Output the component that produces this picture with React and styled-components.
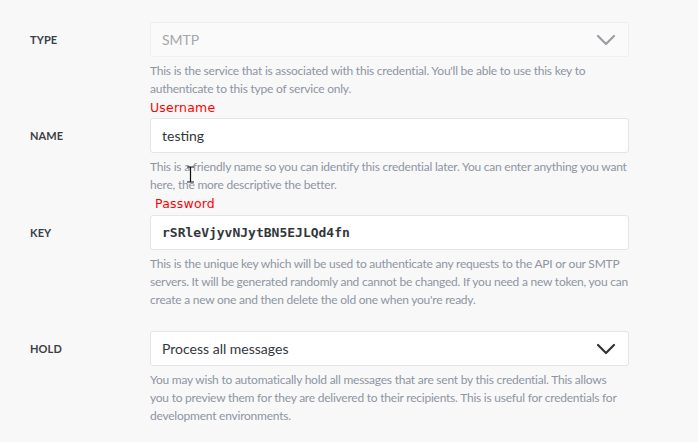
import React from 'react';
import styled, { createGlobalStyle, css } from 'styled-components';

const GlobalStyle = createGlobalStyle`
  html, body {
    margin: 0;
    padding: 0;
    background: #f8f8f9;
  }
  body {
    font-family: Lato, "Open Sans", "Liberation Sans", sans-serif;
    -webkit-font-smoothing: antialiased;
  }
`;

const Page = styled.div`
  position: relative;
  width: 698px;
  height: 442px;
  overflow: hidden;
  padding: 2px 0 0 30px;
  box-sizing: border-box;
`;

const Field = styled.div`
  display: grid;
  grid-template-columns: 120px 479px;
  grid-template-areas:
    ". note"
    "label control"
    ". help";
  align-items: center;
`;

const Note = styled.div`
  grid-area: note;
  box-sizing: border-box;
  height: ${p => p.$height || 20}px;
  padding: 3px 0 0 ${p => p.$indent || 0}px;
  font-family: "DejaVu Sans", Verdana, sans-serif;
  font-size: 12.5px;
  line-height: 14px;
  color: #ff0000;
  letter-spacing: 0.2px;
`;

const Label = styled.div`
  grid-area: label;
  font-size: 11px;
  font-weight: 700;
  color: #3a3f47;
  letter-spacing: 0.1px;
`;

const Control = styled.div`
  grid-area: control;
  height: 35px;
  box-sizing: border-box;
  display: flex;
  align-items: center;
  justify-content: space-between;
  padding: 0 12px 0 11px;
  border: 1px solid ${p => (p.$disabled ? '#efeff1' : '#e4e5e8')};
  border-radius: 3px;
  background: ${p => (p.$disabled ? '#fafafa' : '#ffffff')};
  font-size: 14px;
  color: ${p => (p.$disabled ? '#a4a7ac' : '#33373d')};
  ${p => p.$mono && css`
    font-family: "DejaVu Sans Mono", "Liberation Mono", monospace;
    font-size: 13px;
    font-weight: 600;
    letter-spacing: 0;
  `}
`;

const Help = styled.div`
  grid-area: help;
  margin-top: 5px;
  font-size: 12px;
  letter-spacing: -0.23px;
  line-height: 18px;
  color: #8e95a1;
`;

const Line = styled.span`
  display: block;
  white-space: nowrap;
`;

const Chevron = ({ color }) => (
  <svg width="20" height="12" viewBox="0 0 20 12" fill="none">
    <path d="M2 2l8 8 8-8" stroke={color} strokeWidth="2.2" strokeLinecap="round" strokeLinejoin="round" />
  </svg>
);

const Cursor = styled.svg`
  position: absolute;
  left: 186px;
  top: 166px;
`;

const App = () => (
  <Page>
    <GlobalStyle />
    <Field>
      <Note />
      <Label>TYPE</Label>
      <Control $disabled>
        SMTP
        <Chevron color="#9a9da2" />
      </Control>
      <Help>
        <Line>This is the service that is associated with this credential. You'll be able to use this key to</Line>
        <Line>authenticate to this type of service only.</Line>
      </Help>
    </Field>
    <Field>
      <Note>Username</Note>
      <Label>NAME</Label>
      <Control>testing</Control>
      <Help>
        <Line>This is a friendly name so you can identify this credential later. You can enter anything you want</Line>
        <Line>here, the more descriptive the better.</Line>
      </Help>
    </Field>
    <Field>
      <Note $indent={5} $height={21}>Password</Note>
      <Label>KEY</Label>
      <Control $mono>rSRleVjyvNJytBN5EJLQd4fn</Control>
      <Help>
        <Line>This is the unique key which will be used to authenticate any requests to the API or our SMTP</Line>
        <Line>servers. It will be generated randomly and cannot be changed. If you need a new token, you can</Line>
        <Line>create a new one and then delete the old one when you're ready.</Line>
      </Help>
    </Field>
    <Field>
      <Note $height={22} />
      <Label>HOLD</Label>
      <Control>
        Process all messages
        <Chevron color="#2f3338" />
      </Control>
      <Help>
        <Line>You may wish to automatically hold all messages that are sent by this credential. This allows</Line>
        <Line>you to preview them for they are delivered to their recipients. This is useful for credentials for</Line>
        <Line>development environments.</Line>
      </Help>
    </Field>
    <Cursor width="9" height="17" viewBox="0 0 9 17">
      <path d="M1 1h2.5M5.5 1H8M4.5 1.5v14M1 16h2.5M5.5 16H8M3.5 1h2M3.5 16h2" stroke="#111" strokeWidth="1.2" fill="none" />
    </Cursor>
  </Page>
);

export default App;
